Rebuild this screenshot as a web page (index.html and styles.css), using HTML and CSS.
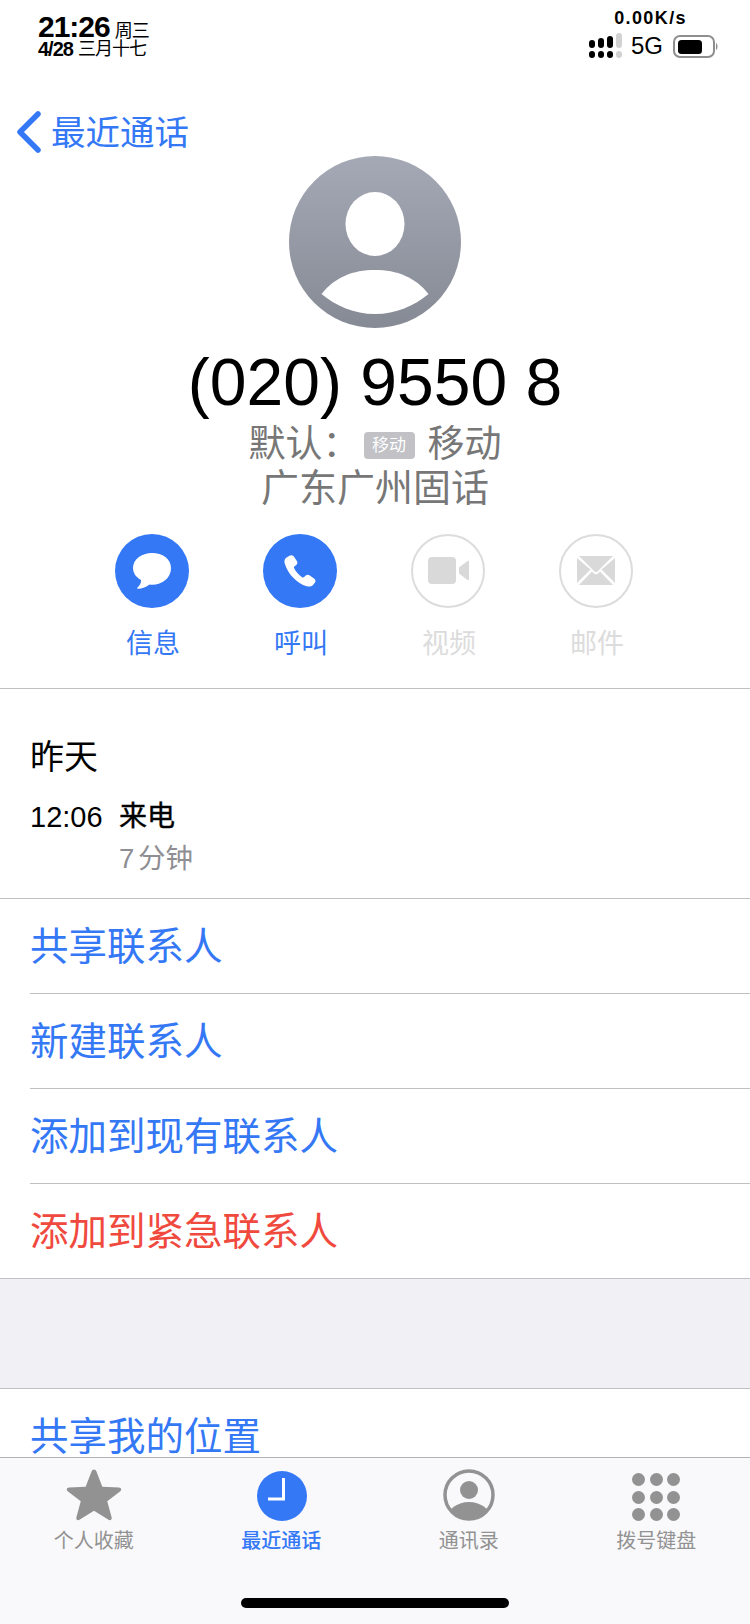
FILE: index.html
```html
<!DOCTYPE html>
<html lang="zh-CN">
	<head>
		<meta charset="UTF-8" />
		<title>最近通话</title>
		<link rel="stylesheet" href="styles.css">
	</head>
	<body>
		<div id="root">
			<div class="status">
				<div class="clock">
					<div class="clock-top"><span class="time">21:26</span><span class="week">周三</span></div>
					<div class="clock-date"><span class="date">4/28</span><span class="lunar">三月十七</span></div>
				</div>
				<div class="net">
					<div class="speed">0.00K/s</div>
					<div class="net-row">
						<svg class="signal" width="34" height="26" viewBox="0 0 34 26">
							<g fill="#000">
								<rect x="0" y="7" width="6" height="8" rx="3"/><rect x="9" y="5" width="6" height="10" rx="3"/><rect x="18" y="3" width="6" height="12" rx="3"/>
								<rect x="0" y="18" width="6" height="7" rx="3"/><rect x="9" y="18" width="6" height="7" rx="3"/><rect x="18" y="18" width="6" height="7" rx="3"/>
							</g>
							<rect x="27" y="0" width="6" height="15" rx="3" fill="#d2d2d2"/><rect x="27" y="18" width="6" height="7" rx="3" fill="#d2d2d2"/>
						</svg>
						<span class="net-type">5G</span>
						<svg class="battery" width="45" height="23" viewBox="0 0 45 23">
							<rect x="1" y="1" width="40" height="21" rx="6" fill="none" stroke="#8e8e8e" stroke-width="2"/>
							<rect x="5" y="5" width="24" height="14" rx="3.500" fill="#000"/>
							<path d="M43 8c2 1 2 6 0 7z" fill="#8e8e8e"/>
						</svg>
					</div>
				</div>
			</div>

			<div class="page">
				<div class="back">
					<svg class="back-arrow" width="28" height="44" viewBox="0 0 28 44"><path d="M24 4 6 22l18 18" fill="none" stroke="#3478f6" stroke-width="5.500" stroke-linecap="round" stroke-linejoin="round"/></svg>
					<span>最近通话</span>
				</div>

				<div class="head">
					<svg class="avatar" width="172" height="172" viewBox="0 0 172 172">
						<defs>
							<linearGradient id="avatar-bg" x1="0" y1="0" x2="0" y2="1"><stop offset="0" stop-color="#a5a9b5"/><stop offset="1" stop-color="#868a95"/></linearGradient>
						</defs>
						<circle cx="86" cy="86" r="86" fill="url(#avatar-bg)"/>
						<ellipse cx="86" cy="68" rx="29.500" ry="32" fill="#fff"/>
						<path d="M32.500 138C46 121 64 114 86 114s40 7 53.500 24C125 150 107 158 86 158s-39-8-53.500-20z" fill="#fff"/>
					</svg>
					<div class="number">(020) 9550 8</div>
					<div class="carrier">默认：<span class="sim">移动</span>移动</div>
					<div class="place">广东广州固话</div>
				</div>

				<div class="actions">
					<div class="action">
						<div class="action-icon">
							<svg width="38" height="36" viewBox="0 0 38 36"><path d="M19 0C8.500 0 0 6.500 0 15c0 5.500 3.500 9.500 8 12 .3 2.500-1 5.500-3.500 7.500-.6 .5-.3 1.300 .5 1.300 4 0 8.500-1.800 11.500-4.300 1 .2 1.500 .2 2.500 .2 10.500 0 19-7 19-16.500S29.500 0 19 0z" fill="#fff"/></svg>
						</div>
						<div class="action-label">信息</div>
					</div>
					<div class="action">
						<div class="action-icon">
							<svg width="32" height="32" viewBox="0 0 32 32"><path d="M5.500 .8 2.600 2.600C.6 4 0 6 .8 8.800c1.800 5.500 4.700 10.400 8.700 14.300 4 4 8 6.800 13.200 8.200 2.800 .7 4.700 .1 6.300-1.300l2-2.500c.8-1.200 .6-2.800-.6-3.700l-5-3.600c-1.300-.9-2.700-.7-3.700 .3l-1.600 1.600c-.6 .6-1.200 .6-2 .1-1.800-1.100-3.300-2.500-4.700-4.100-1.400-1.600-2.400-3.100-3.200-4.800-.4-.9-.3-1.500 .4-2.100l1.700-1.300c1.100-.9 1.400-2.300 .7-3.600L10 1.800C9 .3 7.200 -.2 5.500 .8z" fill="#fff"/></svg>
						</div>
						<div class="action-label">呼叫</div>
					</div>
					<div class="action off">
						<div class="action-icon">
							<svg width="41" height="28" viewBox="0 0 41 28"><rect x="0" y="0" width="28" height="27" rx="4" fill="#d9d9d9"/><path d="M31 10.500 39.500 4c.7-.5 1.500-.2 1.500 .7v17.600c0 .9-.8 1.200-1.500 .7L31 16.500z" fill="#d9d9d9"/></svg>
						</div>
						<div class="action-label">视频</div>
					</div>
					<div class="action off">
						<div class="action-icon">
							<svg width="38" height="30" viewBox="0 0 38 30"><g fill="#d9d9d9"><path d="M2 0h34L20.500 15.500c-.8 .7-2.200 .7-3 0z"/><path d="M0 2v25L13.500 13.500z"/><path d="M38 2v25L24.500 13.500z"/><path d="M2 29 15 15.500l1.800 1.800c1.300 1.200 3.100 1.200 4.400 0l1.800-1.800L36 29z"/></g></svg>
						</div>
						<div class="action-label">邮件</div>
					</div>
				</div>

				<div class="history">
					<div class="history-day">昨天</div>
					<div class="call">
						<div class="call-time">12:06</div>
						<div>
							<div class="call-type">来电</div>
							<div class="call-length">7 分钟</div>
						</div>
					</div>
				</div>

				<div class="list">
					<div class="list-item">共享联系人</div>
					<div class="list-item">新建联系人</div>
					<div class="list-item">添加到现有联系人</div>
					<div class="list-item danger">添加到紧急联系人</div>
				</div>

				<div class="gap"></div>

				<div class="list list-last">
					<div class="list-item">共享我的位置</div>
				</div>
			</div>

			<div class="tabs">
				<div class="tab">
					<svg width="56" height="54" viewBox="0 0 56 54"><path d="M28 1.500c1.200 0 2 .8 2.500 2l6 15.500 17 .8c2.200 .1 3 2.400 1.300 3.800L41.500 34l4.500 16.500c.5 2-1.500 3.500-3.200 2.300L28 43.500l-14.800 9.300c-1.700 1.200-3.700-.3-3.200-2.300L14.500 34 1.200 23.600C-.5 22.200 .3 19.900 2.500 19.800l17-.8 6-15.500c.5-1.200 1.300-2 2.500-2z" fill="#929292"/></svg>
					<div class="tab-label">个人收藏</div>
				</div>
				<div class="tab on">
					<svg class="tab-clock" width="50" height="50" viewBox="0 0 50 50"><circle cx="25" cy="25" r="25" fill="#3478f6"/><path d="M26.500 7v21H11" fill="none" stroke="#fff" stroke-width="3"/></svg>
					<div class="tab-label">最近通话</div>
				</div>
				<div class="tab">
					<svg width="52" height="52" viewBox="0 0 52 52"><defs><clipPath id="tab-person"><circle cx="26" cy="26" r="23"/></clipPath></defs><circle cx="26" cy="26" r="24" fill="none" stroke="#929292" stroke-width="3.500"/><circle cx="26" cy="21" r="9" fill="#929292"/><ellipse cx="26" cy="48" rx="21" ry="15" fill="#929292" clip-path="url(#tab-person)"/></svg>
					<div class="tab-label">通讯录</div>
				</div>
				<div class="tab">
					<div class="keypad"><i></i><i></i><i></i><i></i><i></i><i></i><i></i><i></i><i></i></div>
					<div class="tab-label">拨号键盘</div>
				</div>
			</div>
			<div class="home-bar"></div>
		</div>
	</body>
</html>
```

FILE: styles.css
```css
html, body { margin: 0; padding: 0; background: white; color: black; font-family: "Liberation Sans", "Noto Sans CJK SC", sans-serif; }
#root { position: relative; width: 750px; height: 1624px; overflow: hidden; display: flex; flex-direction: column; }

.status { height: 90px; flex: none; display: flex; justify-content: space-between; box-sizing: border-box; padding: 13px 32px 0 38px; }
.clock { letter-spacing: -1px; }
.clock-top { display: flex; align-items: flex-end; height: 27px; gap: 5px; }
.time { font-size: 30px; font-weight: bold; line-height: 27px; }
.week { font-size: 18px; line-height: 17px; letter-spacing: -1px; }
.clock-date { display: flex; align-items: center; height: 18px; gap: 5px; }
.date { font-size: 20px; font-weight: bold; line-height: 18px; letter-spacing: -1px; }
.lunar { font-size: 18px; line-height: 18px; letter-spacing: -1px; }
.net { display: flex; flex-direction: column; align-items: flex-end; }
.speed { font-size: 18px; font-weight: bold; line-height: 20px; margin-right: 31px; margin-top: -5px; letter-spacing: 1.400px; }
.net-row { display: flex; align-items: center; margin-top: 4px; height: 28px; }
.signal { margin-right: 8px; }
.net-type { font-size: 24px; margin-right: 10px; }

.page { flex: 1; min-height: 0; overflow: hidden; }
.back { height: 44px; margin-top: 18px; padding-left: 14px; display: flex; align-items: center; color: #3478f6; font-size: 34.500px; gap: 9px; }
.back-arrow { margin-top: 4px; }

.head { display: flex; flex-direction: column; align-items: center; margin-top: 4px; }
.number { font-size: 66px; line-height: 74px; margin-top: 17px; }
.carrier { display: flex; align-items: center; color: #777; font-size: 37px; line-height: 46px; margin-top: 3px; }
.sim { background: #c1c1c6; color: white; font-size: 17px; line-height: 27px; width: 51px; text-align: center; border-radius: 4px; margin: 0 13px 0 4px; }
.place { color: #777; font-size: 38px; line-height: 46px; margin-top: -3px; }

.actions { display: flex; justify-content: center; gap: 74px; margin-top: 23px; height: 154px; border-bottom: 1px solid #c0c0c3; padding-right: 2px; }
.action { width: 74px; display: flex; flex-direction: column; align-items: center; }
.action-icon { width: 74px; height: 74px; border-radius: 50%; background: #3478f6; display: flex; align-items: center; justify-content: center; box-sizing: border-box; }
.action-label { color: #3478f6; font-size: 27px; line-height: 36px; margin-top: 18px; padding-left: 2px; white-space: nowrap; }
.off .action-icon { background: none; border: 2px solid #dcdcdc; }
.off .action-label { color: #dcdcdc; }

.history { height: 209px; box-sizing: border-box; padding: 45px 0 0 30px; }
.history-day { font-size: 34px; line-height: 46px; }
.call { display: flex; margin-top: 19px; }
.call-time { width: 89px; font-size: 29px; line-height: 36px; }
.call-type { font-size: 28px; line-height: 36px; -webkit-text-stroke: 0.400px black; }
.call-length { color: #8e8e93; font-size: 27.500px; line-height: 47px; word-spacing: -4px; }

.list { border-top: 1px solid #c0c0c3; border-bottom: 1px solid #c0c0c3; padding-left: 30px; }
.list-item { height: 94px; font-size: 38.500px; line-height: 96px; color: #3478f6; border-bottom: 1px solid #c0c0c3; }
.list-item:last-child { border-bottom: 0; }
.danger { color: #f0493e; }
.gap { height: 109px; background: #f0f0f5; }
.list-last { border-bottom: 0; }

.tabs { height: 167px; flex: none; box-sizing: border-box; border-top: 1px solid #b2b2b2; background: #f9f9fb; display: grid; grid-template-columns: repeat(4, 1fr); padding: 10px 0 0 0; }
.tab { display: flex; flex-direction: column; align-items: center; height: 86px; justify-content: flex-end; }
.tab-clock { margin-left: 2px; }
.tab-label { color: #929292; font-size: 20px; line-height: 26px; margin-top: 7px; white-space: nowrap; }
.on .tab-label { color: #3478f6; font-weight: 500; }
.keypad { display: grid; grid-template-columns: repeat(3, 13px); gap: 4.500px; }
.keypad i { display: block; width: 13px; height: 13px; border-radius: 50%; background: #929292; }

.home-bar { position: absolute; left: 241px; right: 241px; bottom: 16px; height: 10px; border-radius: 5px; background: black; }
```
